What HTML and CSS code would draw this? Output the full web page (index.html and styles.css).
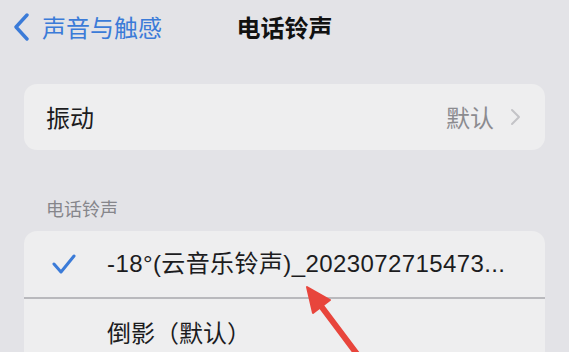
FILE: index.html
```html
<!DOCTYPE html>
<html lang="zh-CN">
<head>
<meta charset="utf-8">
<title>电话铃声</title>
<link rel="stylesheet" href="styles.css">
</head>
<body>
<div class="screen">
  <header class="nav">
    <div class="back">
      <svg class="back-chevron" width="16" height="28" viewBox="0 0 16 28"><path d="M14 2 L3 14 L14 26" fill="none" stroke="#3b7bd8" stroke-width="3.4" stroke-linecap="round" stroke-linejoin="round"/></svg>
      <span class="back-text">声音与触感</span>
    </div>
    <div class="title">电话铃声</div>
    <div class="nav-spacer"></div>
  </header>

  <section class="card">
    <div class="row row-vibrate">
      <span class="label">振动</span>
      <span class="value">默认</span>
      <svg class="chev" width="11" height="18" viewBox="0 0 11 18"><path d="M2 2 L9 9 L2 16" fill="none" stroke="#c3c3c7" stroke-width="2" stroke-linecap="round" stroke-linejoin="round"/></svg>
    </div>
  </section>

  <div class="section-header">电话铃声</div>

  <section class="card card-list">
    <div class="row row-tone">
      <svg class="check" width="26" height="22" viewBox="0 0 26 22"><path d="M3 11 L10 19 L23 3" fill="none" stroke="#3b7bd8" stroke-width="3" stroke-linecap="round" stroke-linejoin="round"/></svg>
      <span class="tone tone-latin">-18°(云音乐铃声)_2023072715473...</span>
    </div>
    <div class="sep"></div>
    <div class="row row-tone">
      <span class="check-space"></span>
      <span class="tone">倒影（默认）</span>
    </div>
  </section>

  <svg class="arrow" width="569" height="352" viewBox="0 0 569 352">
    <line x1="318" y1="302" x2="366" y2="366" stroke="#e8453c" stroke-width="6" stroke-linecap="round"/>
    <polygon points="307,287 330,300 313,313" fill="#e8453c" stroke="#e8453c" stroke-width="2" stroke-linejoin="round"/>
  </svg>
</div>
</body>
</html>
```

FILE: styles.css
```css
* { box-sizing: border-box; }
html, body {
  margin: 0;
  padding: 0;
  width: 569px;
  height: 352px;
  overflow: hidden;
  background: #e3e3e7;
}
.screen {
  position: relative;
  width: 569px;
  height: 352px;
  font-family: "Noto Sans CJK SC", "Noto Sans", sans-serif;
  color: #1c1c1e;
}
.nav {
  display: grid;
  grid-template-columns: 1fr auto 1fr;
  align-items: center;
  height: 54px;
}
.back {
  display: flex;
  align-items: center;
  padding-left: 13px;
  gap: 13px;
}
.back-chevron { display: block; }
.back-text {
  font-size: 24px;
  line-height: 30px;
  color: #3b7bd8;
}
.title {
  font-size: 24px;
  line-height: 30px;
  font-weight: 700;
  color: #111;
}
.card {
  margin: 30px 24px 0 24px;
  background: #eeeeef;
  border-radius: 13px;
  overflow: hidden;
}
.row {
  display: flex;
  align-items: center;
  height: 66px;
  padding: 0 24px 0 22px;
}
.label {
  flex: 1;
  font-size: 24px;
  line-height: 30px;
}
.value {
  font-size: 24px;
  line-height: 30px;
  color: #8b8b8f;
  margin-right: 16px;
}
.chev { display: block; }
.section-header {
  margin: 46px 0 0 46px;
  font-size: 18px;
  line-height: 24px;
  color: #86868b;
}
.card-list { margin-top: 11px; }
.row-tone { padding-left: 27px; }
.check { display: block; width: 26px; margin-right: 30px; }
.check-space { display: block; width: 26px; margin-right: 30px; }
.tone {
  font-size: 24px;
  line-height: 30px;
  white-space: nowrap;
}
.tone-latin {
  font-family: "Liberation Sans", "Noto Sans CJK SC", sans-serif;
  letter-spacing: 0.4px;
}
.sep {
  height: 2px;
  background: #b9b9bd;
}
.arrow {
  position: absolute;
  left: 0;
  top: 0;
  pointer-events: none;
}
```
